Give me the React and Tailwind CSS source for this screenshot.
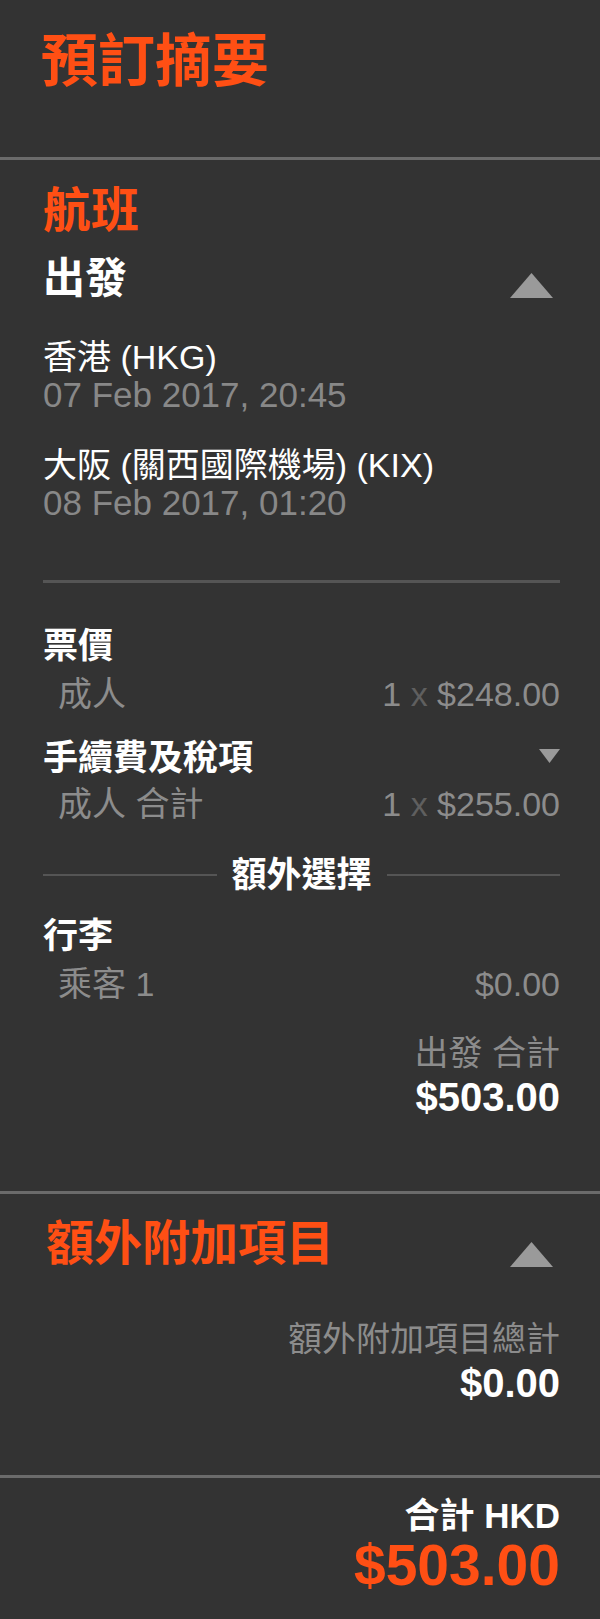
import React from 'react'

const UpArrow = ({ className = '' }) => (
  <svg width="43" height="25" viewBox="0 0 43 25" className={className}>
    <polygon points="21.5,0 43,25 0,25" fill="#9a9a9a" />
  </svg>
)

const SmallDown = ({ className = '' }) => (
  <svg width="21" height="14" viewBox="0 0 21 14" className={className}>
    <polygon points="0,0 21,0 10.5,14" fill="#9a9a9a" />
  </svg>
)

function PriceRow({ label, qty, price, className = '' }) {
  return (
    <div className={`flex justify-between pl-[15px] text-[34px] leading-none text-[#8c8c8c] ${className}`}>
      <span>{label}</span>
      <span>
        {qty && (
          <>
            {qty} <span className="text-[#5f5f5f]">x</span>{' '}
          </>
        )}
        {price}
      </span>
    </div>
  )
}

export default function App() {
  return (
    <div className="w-[600px] min-h-[1619px] bg-[#333333] text-white font-['Liberation_Sans','Noto_Sans_CJK_TC',sans-serif]">
      {/* header */}
      <div className="h-[160px] border-b-[3px] border-[#6b6b6b] pl-[41px] pt-[33px]">
        <h1 className="text-[57px] leading-none font-bold text-[#ff4f14]">預訂摘要</h1>
      </div>

      {/* flight */}
      <div className="h-[1034px] border-b-[3px] border-[#6b6b6b] pl-[43px] pr-[40px] pt-[27px]">
        <h2 className="text-[48px] leading-none font-bold text-[#ff4f14]">航班</h2>

        <div className="mt-[23px] flex items-start justify-between">
          <span className="text-[42px] leading-none font-bold">出發</span>
          <UpArrow className="mt-[15px] mr-[7px]" />
        </div>

        <div className="mt-[40px] text-[34px] leading-none">香港 (HKG)</div>
        <div className="mt-[3px] text-[35px] leading-none text-[#888888]">07 Feb 2017, 20:45</div>

        <div className="mt-[36px] text-[34px] leading-none">大阪 (關西國際機場) (KIX)</div>
        <div className="mt-[3px] text-[35px] leading-none text-[#888888]">08 Feb 2017, 01:20</div>

        <div className="mt-[60px] h-[3px] bg-[#555555]" />

        <div className="mt-[45px] text-[35px] leading-none font-bold">票價</div>
        <PriceRow className="mt-[14px]" label="成人" qty="1" price="$248.00" />

        <div className="mt-[29px] flex items-start justify-between">
          <span className="text-[35px] leading-none font-bold">手續費及稅項</span>
          <SmallDown className="mt-[9px]" />
        </div>
        <PriceRow className="mt-[12px]" label="成人 合計" qty="1" price="$255.00" />

        <div className="mt-[36px] flex items-center gap-[15px]">
          <div className="h-[2px] flex-1 bg-[#555555]" />
          <span className="text-[35px] leading-none font-bold">額外選擇</span>
          <div className="h-[2px] flex-1 bg-[#555555]" />
        </div>

        <div className="mt-[26px] text-[35px] leading-none font-bold">行李</div>
        <PriceRow className="mt-[14px]" label="乘客 1" price="$0.00" />

        <div className="mt-[35px] text-right text-[34px] leading-none text-[#8c8c8c]">出發 合計</div>
        <div className="mt-[7px] text-right text-[40px] leading-none font-bold">$503.00</div>
      </div>

      {/* extras */}
      <div className="h-[284px] border-b-[3px] border-[#6b6b6b] pl-[46px] pr-[40px] pt-[26px]">
        <div className="flex items-start justify-between">
          <h2 className="text-[48px] leading-none font-bold text-[#ff4f14]">額外附加項目</h2>
          <UpArrow className="mt-[22px] mr-[7px]" />
        </div>
        <div className="mt-[54px] text-right text-[34px] leading-none text-[#8c8c8c]">額外附加項目總計</div>
        <div className="mt-[7px] text-right text-[40px] leading-none font-bold">$0.00</div>
      </div>

      {/* total */}
      <div className="pr-[40px] pt-[20px] pb-[24px] text-right">
        <div className="text-[35px] leading-none font-bold">合計 HKD</div>
        <div className="mt-[4px] text-[57px] leading-none font-bold text-[#ff4f14]">$503.00</div>
      </div>
    </div>
  )
}
